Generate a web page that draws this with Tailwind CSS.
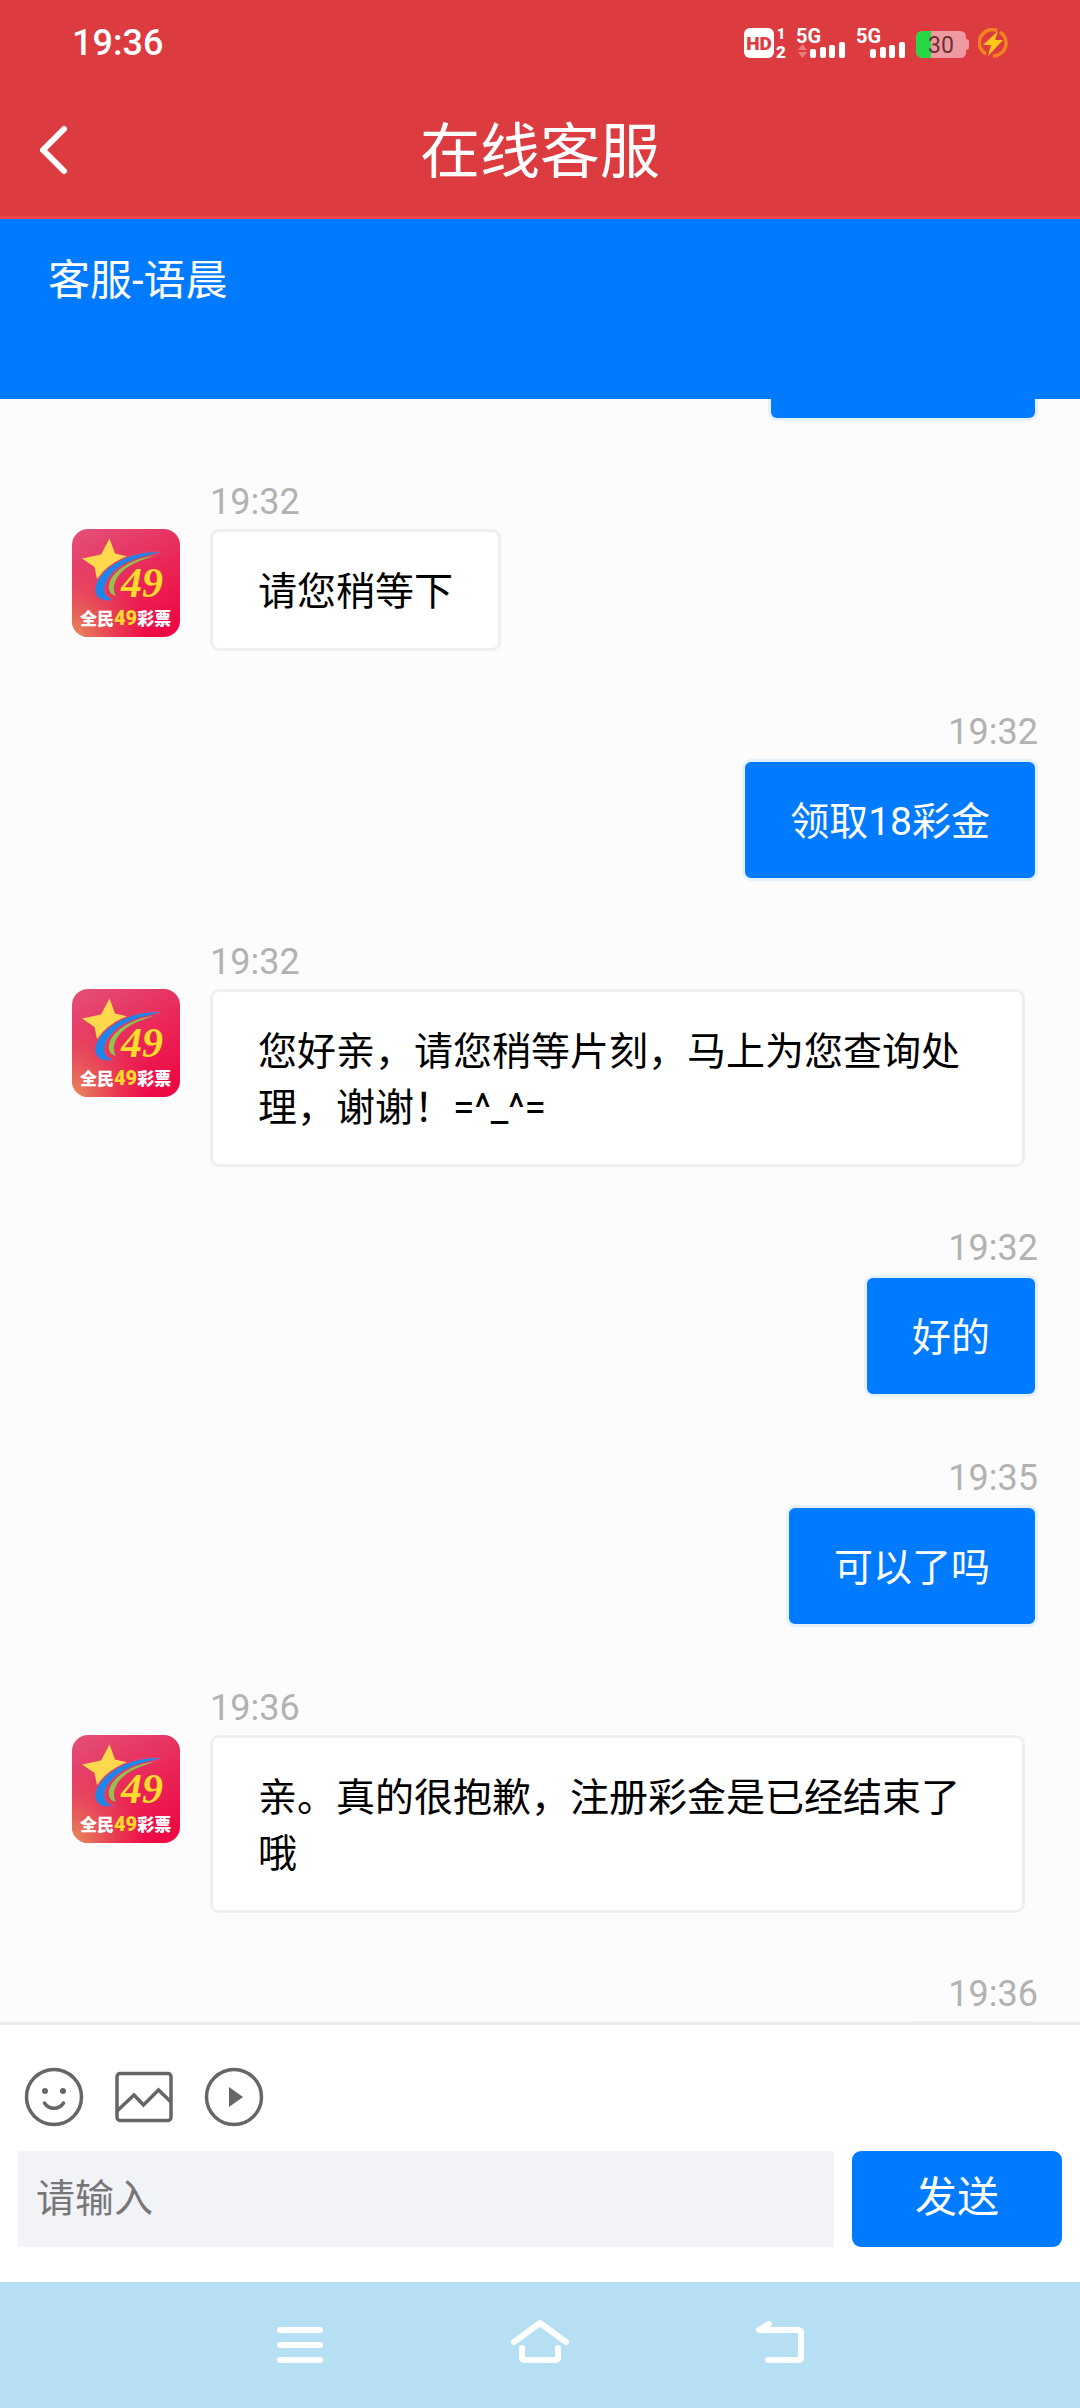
<!DOCTYPE html>
<html lang="zh-CN">
<head>
    <meta charset="UTF-8">
    <meta name="viewport" content="width=device-width, initial-scale=1.0">
    <title>在线客服</title>
    <script src="https://cdn.jsdelivr.net/npm/@tailwindcss/browser@4"></script>
</head>
<body class="font-[Roboto,'Noto_Sans_CJK_SC',sans-serif]">
    <!-- Shared drawings -->
    <svg class="absolute size-0">
        <defs>
            <linearGradient id="logoBase" x1="0.2" y1="0" x2="0.8" y2="1">
                <stop offset="0" stop-color="#e44c74"/>
                <stop offset="0.55" stop-color="#ea2556"/>
                <stop offset="1" stop-color="#ee0844"/>
            </linearGradient>
            <radialGradient id="logoCorner" cx="0" cy="1" r="0.7">
                <stop offset="0" stop-color="#e6935a"/>
                <stop offset="1" stop-color="#e6535a" stop-opacity="0"/>
            </radialGradient>
        </defs>
        <symbol id="bars" viewBox="0 0 52 30">
            <rect x="14" y="21" width="6" height="9" rx="2" fill="#fff"/>
            <rect x="24" y="19" width="6" height="11" rx="2" fill="#fff"/>
            <rect x="33" y="17" width="6" height="13" rx="2" fill="#fff"/>
            <rect x="43" y="14" width="6" height="16" rx="2" fill="#fff"/>
        </symbol>
        <symbol id="logo" viewBox="0 0 108 108">
            <rect width="108" height="108" fill="url(#logoBase)"/>
            <rect width="108" height="108" fill="url(#logoCorner)"/>
            <path d="M37.5 9.5L43 24.5L56 27.5L45 37L25 50L22.5 38L10 29.5L29 25.5Z" fill="#ffd84d"/>
            <path d="M88 23.5C62 22 38 34 27 50C19 63 25 73 40 71C30 66 30 57 37 48C46 35 62 29 88 23.5Z" fill="#1e86e8" stroke="#e0416a" stroke-width="3" paint-order="stroke"/>
            <path d="M82 27C60 29 43 41 38 52C35 60 37 65 44 67C41 61 41 56 45 49C51 39 62 33 82 27Z" fill="#96bf50" stroke="#e0345f" stroke-width="2" paint-order="stroke"/>
        </symbol>
    </svg>

    <div class="flex h-screen flex-col bg-[#fcfcfc]">
        <header class="shrink-0 border-b-3 border-[#ec434e] bg-[#dc3b40] text-white">
            <!-- Status bar -->
            <div class="flex h-[84px] items-center justify-between px-[72px] pt-0.5">
                <span class="text-[36px] leading-[42px] font-medium">19:36</span>
                <div class="flex items-center gap-2">
                    <svg class="h-[30px] w-[44px] overflow-visible" viewBox="0 0 44 30">
                        <rect width="30" height="30" rx="6" fill="#fff"/>
                        <text x="15" y="22" text-anchor="middle" font-size="19" font-weight="900" fill="#dc3b40">HD</text>
                        <text x="37" y="11" text-anchor="middle" font-size="15" font-weight="900" fill="#fff">1</text>
                        <text x="37" y="30" text-anchor="middle" font-size="17" font-weight="900" fill="#fff">2</text>
                    </svg>
                    <svg class="h-[30px] w-[52px] overflow-visible" viewBox="0 0 52 30">
                        <text x="0" y="15" font-size="20" font-weight="700" fill="#fff">5G</text>
                        <use href="#bars"/>
                        <path d="M2 22L6.5 16L11 22ZM2 24L6.5 30L11 24Z" fill="#ea7c80"/>
                    </svg>
                    <svg class="h-[30px] w-[52px] overflow-visible" viewBox="0 0 52 30">
                        <text x="0" y="15" font-size="20" font-weight="700" fill="#fff">5G</text>
                        <use href="#bars"/>
                    </svg>
                    <svg class="h-[30px] w-[54px] overflow-visible" viewBox="0 0 54 30">
                        <path d="M7 3H44Q50 3 50 9V11Q53 11 53 14V19Q53 22 50 22V24Q50 30 44 30H7Q0 30 0 23V10Q0 3 7 3Z" fill="#ef9aa0"/>
                        <path d="M15 3H7Q0 3 0 10V23Q0 30 7 30H15Z" fill="#27d845"/>
                        <text x="25" y="25" text-anchor="middle" font-size="23" fill="#6c2f35">30</text>
                    </svg>
                    <svg class="h-[30px] w-[30px]" viewBox="0 0 30 30" fill="none">
                        <path d="M19 2.5A13 13 0 0 0 8 26" stroke="#f58220" stroke-width="3.5"/>
                        <path d="M22 4A13 13 0 0 1 15 28" stroke="#f58220" stroke-width="3.5"/>
                        <path d="M20 3L5 17H13L10 28L25 12H17Z" fill="#ffc61a"/>
                    </svg>
                </div>
            </div>
            <!-- Title bar -->
            <div class="grid h-[132px] grid-cols-[1fr_auto_1fr] items-center px-9">
                <button type="button" aria-label="返回" class="w-9">
                    <svg class="h-[54px] w-9" viewBox="0 0 36 54" fill="none" stroke="#fff" stroke-width="6" stroke-linecap="round" stroke-linejoin="round">
                        <path d="M28 6L7 27L28 48"/>
                    </svg>
                </button>
                <h1 class="pt-1.5 text-[60px] leading-[84px]">在线客服</h1>
            </div>
        </header>

        <div class="h-[180px] shrink-0 bg-[#007aff] px-12 py-8 text-[42px] leading-[60px] text-white">
            客服-语晨
        </div>

        <!-- Messages -->
        <main class="flex min-h-0 flex-1 flex-col gap-[59px] overflow-hidden pr-[42px] pl-[72px] text-[39px] leading-[56px]">
            <div class="h-[22px] w-[270px] shrink-0 self-end rounded-b-[9px] border-3 border-t-0 border-[#e4f1fa] bg-[#007aff]"></div>

            <div class="flex shrink-0 items-end gap-[30px]">
                <svg class="mt-[49px] size-[108px] shrink-0 self-start rounded-2xl" viewBox="0 0 108 108">
                    <use href="#logo"/>
                    <text x="49" y="68" font-family="Liberation Serif" font-size="42" font-weight="700" font-style="italic" fill="#ffdc2b">49</text>
                    <text x="8" y="96" font-family="Noto Sans CJK SC" font-size="17" font-weight="900" fill="#fff">全民<tspan font-family="Roboto" font-size="20" fill="#ffd92b">49</tspan>彩票</text>
                </svg>
                <div class="flex flex-col items-start gap-[5px]">
                    <time class="text-[36px] leading-[44px] text-[#b2b2b2]">19:32</time>
                    <p class="max-w-[815px] rounded-[9px] border-3 border-[#efefef] bg-white px-[45px] pt-8 pb-7 text-black">请您稍等下</p>
                </div>
            </div>

            <div class="flex shrink-0 flex-col items-end gap-[5px]">
                <time class="text-[36px] leading-[44px] text-[#b2b2b2]">19:32</time>
                <p class="max-w-[815px] rounded-[9px] border-3 border-[#e4f1fa] bg-[#007aff] px-[45px] pt-8 pb-7 text-white">领取18彩金</p>
            </div>

            <div class="flex shrink-0 items-end gap-[30px]">
                <svg class="mt-[49px] size-[108px] shrink-0 self-start rounded-2xl" viewBox="0 0 108 108">
                    <use href="#logo"/>
                    <text x="49" y="68" font-family="Liberation Serif" font-size="42" font-weight="700" font-style="italic" fill="#ffdc2b">49</text>
                    <text x="8" y="96" font-family="Noto Sans CJK SC" font-size="17" font-weight="900" fill="#fff">全民<tspan font-family="Roboto" font-size="20" fill="#ffd92b">49</tspan>彩票</text>
                </svg>
                <div class="flex flex-col items-start gap-[5px]">
                    <time class="text-[36px] leading-[44px] text-[#b2b2b2]">19:32</time>
                    <p class="max-w-[815px] rounded-[9px] border-3 border-[#efefef] bg-white px-[45px] pt-8 pb-7 text-black">您好亲，请您稍等片刻，马上为您查询处理，谢谢！=^_^=</p>
                </div>
            </div>

            <div class="flex shrink-0 flex-col items-end gap-[5px]">
                <time class="text-[36px] leading-[44px] text-[#b2b2b2]">19:32</time>
                <p class="max-w-[815px] rounded-[9px] border-3 border-[#e4f1fa] bg-[#007aff] px-[45px] pt-8 pb-7 text-white">好的</p>
            </div>

            <div class="flex shrink-0 flex-col items-end gap-[5px]">
                <time class="text-[36px] leading-[44px] text-[#b2b2b2]">19:35</time>
                <p class="max-w-[815px] rounded-[9px] border-3 border-[#e4f1fa] bg-[#007aff] px-[45px] pt-8 pb-7 text-white">可以了吗</p>
            </div>

            <div class="flex shrink-0 items-end gap-[30px]">
                <svg class="mt-[49px] size-[108px] shrink-0 self-start rounded-2xl" viewBox="0 0 108 108">
                    <use href="#logo"/>
                    <text x="49" y="68" font-family="Liberation Serif" font-size="42" font-weight="700" font-style="italic" fill="#ffdc2b">49</text>
                    <text x="8" y="96" font-family="Noto Sans CJK SC" font-size="17" font-weight="900" fill="#fff">全民<tspan font-family="Roboto" font-size="20" fill="#ffd92b">49</tspan>彩票</text>
                </svg>
                <div class="flex flex-col items-start gap-[5px]">
                    <time class="text-[36px] leading-[44px] text-[#b2b2b2]">19:36</time>
                    <p class="max-w-[815px] rounded-[9px] border-3 border-[#efefef] bg-white px-[45px] pt-8 pb-7 text-black">亲。真的很抱歉，注册彩金是已经结束了哦</p>
                </div>
            </div>

            <div class="flex shrink-0 flex-col items-end gap-[5px]">
                <time class="text-[36px] leading-[44px] text-[#b2b2b2]">19:36</time>
                <div class="h-4 w-[135px] rounded-t-[9px] border-3 border-b-0 border-[#efefef] bg-[#007aff]"></div>
            </div>
        </main>

        <!-- Composer -->
        <form class="shrink-0 border-t-3 border-[#ececec] bg-white px-[18px] pb-[35px]">
            <div class="flex gap-[30px] px-1.5 pt-[42px] pb-6">
                <button type="button" aria-label="表情">
                    <svg class="size-[60px]" viewBox="0 0 60 60" fill="none" stroke="#666" stroke-width="3.5" stroke-linecap="round">
                        <circle cx="30" cy="30" r="27.5"/>
                        <path d="M20.5 36C25 43 35 43 39.5 36"/>
                        <circle cx="21" cy="24" r="3" fill="#666" stroke="none"/>
                        <circle cx="39" cy="24" r="3" fill="#666" stroke="none"/>
                    </svg>
                </button>
                <button type="button" aria-label="图片">
                    <svg class="size-[60px]" viewBox="0 0 60 60" fill="none" stroke="#666" stroke-width="3.5">
                        <rect x="3" y="6.5" width="54" height="47" rx="3"/>
                        <path d="M3 44L20 28L29.5 38L44.5 23L57 35"/>
                    </svg>
                </button>
                <button type="button" aria-label="视频">
                    <svg class="size-[60px]" viewBox="0 0 60 60" fill="none" stroke="#666" stroke-width="3.5">
                        <circle cx="30" cy="30" r="27.5"/>
                        <path d="M25 20L39 30L25 40Z" fill="#666" stroke="none"/>
                    </svg>
                </button>
            </div>
            <div class="flex gap-[18px]">
                <input type="text" aria-label="请输入" placeholder="请输入" class="h-24 min-w-0 flex-1 bg-[#f2f3f7] px-[18px] text-[39px] text-black outline-none placeholder:text-[#777]">
                <button type="submit" class="h-24 w-[210px] rounded-[9px] bg-[#007aff] pb-1 text-[42px] text-white">发送</button>
            </div>
        </form>

        <!-- System navigation -->
        <nav class="flex h-[126px] shrink-0 items-center justify-center gap-[180px] bg-[#b6dff3]">
            <button type="button" aria-label="菜单">
                <svg class="size-[60px]" viewBox="0 0 60 60" fill="none" stroke="#fff" stroke-width="6" stroke-linecap="round">
                    <path d="M10 15H50M10 30H50M10 45H50"/>
                </svg>
            </button>
            <button type="button" aria-label="主页">
                <svg class="size-[60px]" viewBox="0 0 60 60" fill="none" stroke="#fff" stroke-width="6" stroke-linecap="round" stroke-linejoin="round">
                    <path d="M4 27L30 8L56 27"/>
                    <path d="M12 33V42Q12 45 15 45H45Q48 45 48 42V33"/>
                </svg>
            </button>
            <button type="button" aria-label="后退">
                <svg class="size-[60px]" viewBox="0 0 60 60" fill="none" stroke="#fff" stroke-width="6" stroke-linecap="round" stroke-linejoin="round">
                    <path d="M19 9L9 15H48Q51 15 51 18V42Q51 45 48 45H18"/>
                </svg>
            </button>
        </nav>
    </div>
</body>
</html>
